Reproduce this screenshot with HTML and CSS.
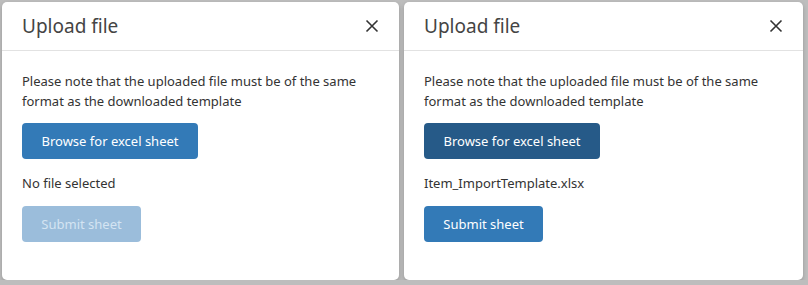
FILE: index.html
```html
<!DOCTYPE html>
<html lang="en">
<head>
    <meta charset="UTF-8">
    <meta name="viewport" content="width=device-width, initial-scale=1.0">
    <title>Upload file</title>
    <link rel="stylesheet" href="styles.css">
</head>
<body>
    <div class="stage">
        <div class="modal modal-left">
            <div class="modal-header">
                <h2>Upload file</h2>
                <button class="close" aria-label="Close">
                    <svg width="14" height="14" viewBox="0 0 14 14"><path d="M1.5 1.5 L12.5 12.5 M12.5 1.5 L1.5 12.5" stroke="#333" stroke-width="1.6" fill="none"/></svg>
                </button>
            </div>
            <div class="modal-body">
                <p class="note">Please note that the uploaded file must be of the same format as the downloaded template</p>
                <button class="btn btn-browse">Browse for excel sheet</button>
                <p class="file-name">No file selected</p>
                <button class="btn btn-submit" disabled>Submit sheet</button>
            </div>
        </div>

        <div class="modal modal-right">
            <div class="modal-header">
                <h2>Upload file</h2>
                <button class="close" aria-label="Close">
                    <svg width="14" height="14" viewBox="0 0 14 14"><path d="M1.5 1.5 L12.5 12.5 M12.5 1.5 L1.5 12.5" stroke="#333" stroke-width="1.6" fill="none"/></svg>
                </button>
            </div>
            <div class="modal-body">
                <p class="note">Please note that the uploaded file must be of the same format as the downloaded template</p>
                <button class="btn btn-browse active">Browse for excel sheet</button>
                <p class="file-name">Item_ImportTemplate.xlsx</p>
                <button class="btn btn-submit">Submit sheet</button>
            </div>
        </div>
    </div>
</body>
</html>
```

FILE: styles.css
```css
body {
    margin: 0;
    background: #bdbdbd;
    font-family: "Noto Sans", "Open Sans", sans-serif;
    color: #333;
}
.stage {
    display: flex;
    gap: 5px;
    padding: 2px 0 0 2px;
}
.modal {
    background: white;
    border-radius: 5px;
    box-shadow: 0 2px 4px rgba(0,0,0,0.2);
    height: 278px;
    box-sizing: border-box;
}
.modal-left {
    width: 397px;
}
.modal-right {
    width: 399px;
}
.modal-header {
    height: 48px;
    border-bottom: 1px solid #e2e2e2;
    display: flex;
    align-items: center;
    justify-content: space-between;
    padding: 0 20px 0 20px;
}
.modal-header h2 {
    margin: 0;
    font-size: 19px;
    font-weight: 400;
    color: #444;
}
.close {
    background: none;
    border: none;
    padding: 0;
    width: 14px;
    height: 14px;
    cursor: pointer;
    display: flex;
}
.modal-body {
    padding: 20px 20px 0 20px;
}
.note {
    margin: 0;
    font-size: 13px;
    line-height: 20px;
}
.file-name {
    margin: 14px 0 13px;
    font-size: 13px;
    line-height: 20px;
}
.btn {
    display: block;
    background: #337ab7;
    color: white;
    border: none;
    border-radius: 4px;
    height: 36px;
    font-family: inherit;
    font-size: 13px;
    cursor: pointer;
}
.btn-browse {
    margin-top: 12px;
    width: 176px;
}
.btn-browse.active {
    background: #265a88;
}
.btn-submit {
    width: 119px;
}
.btn-submit:disabled {
    background: #9bbddb;
    color: #d4e4f2;
    cursor: default;
}
```
